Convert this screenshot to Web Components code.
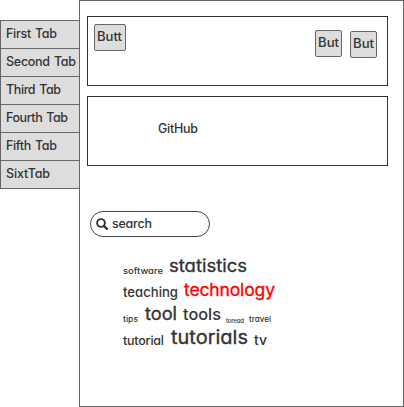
<!DOCTYPE html>
<html lang="en">
<head>
<meta charset="utf-8">
<title>Wireframe</title>
<style>
html,body{margin:0;height:100%;background:#fff;overflow:hidden}
body{font-family:Inter,"Open Sans",sans-serif;font-feature-settings:"cv11";font-size:13px;color:#333;font-weight:450}
</style>
</head>
<body>
<wire-page></wire-page>
<script>
const define = (name, html, ready) => customElements.define(name, class extends HTMLElement {
  connectedCallback() {
    if (this.shadowRoot) return;
    this.attachShadow({mode: "open"}).innerHTML = html;
    if (ready) ready(this);
  }
});

/* A word that fills the width "w": stretched when it is short, spaced tighter when it is long. */
define("fit-text", `<style>
  :host{display:block;white-space:pre;flex:none}
  span{display:inline-block;transform-origin:0 50%;word-spacing:1px}
</style><span><slot></slot></span>`, el => {
  const w = +el.getAttribute("w");
  const span = el.shadowRoot.querySelector("span");
  el.style.fontSize = (el.getAttribute("size") || 12.5) + "px";
  el.style.width = w + "px";
  const natural = span.getBoundingClientRect().width;
  if (natural < w) span.style.transform = `scaleX(${w / natural})`;
  else span.style.letterSpacing = (w - natural) / (el.textContent.length - 1) + "px";
  if (el.hasAttribute("drop")) el.style.transform = `translateY(${el.getAttribute("drop")}px)`;
});

define("side-tab", `<style>
  :host{display:block;box-sizing:border-box;height:28px;padding-left:5px;background:#ddd;
    border:solid #666;border-width:1px 0 0 1px;line-height:25px}
  :host(:last-child){height:29px;border-bottom-width:1px}
</style><slot></slot>`);

define("side-tabs", `<style>
  :host{display:block;width:79px;padding-top:20px;flex:none}
</style>
<side-tab><fit-text w="51">First Tab</fit-text></side-tab>
<side-tab><fit-text w="70">Second Tab</fit-text></side-tab>
<side-tab><fit-text w="55">Third Tab</fit-text></side-tab>
<side-tab><fit-text w="62">Fourth Tab</fit-text></side-tab>
<side-tab><fit-text w="51">Fifth Tab</fit-text></side-tab>
<side-tab><fit-text w="44">SixtTab</fit-text></side-tab>`);

define("wire-button", `<style>
  :host{display:block;box-sizing:border-box;height:27px;border:1px solid #666;border-radius:2px;
    background:#ddd;padding-left:2px;line-height:23px}
</style><slot></slot>`);

define("wire-panel", `<style>
  :host{display:flex;box-sizing:border-box;width:301px;height:70px;border:1px solid #333}
</style><slot></slot>`);

define("search-box", `<style>
  :host{display:flex;box-sizing:border-box;width:120px;height:26px;border:1px solid #444;
    border-radius:13px;line-height:23px;font-weight:500}
  svg{width:12px;height:12px;margin:6px 4px 0 5px}
</style>
<svg viewBox="0 0 12 12" fill="none" stroke="#333"><circle cx="5" cy="5" r="3.9" stroke-width="1.9"/><path d="M7.9 7.9 10.9 10.9" stroke-width="2.2" stroke-linecap="round"/></svg>
<fit-text w="40" size="12.5">search</fit-text>`);

define("tag-cloud", `<style>
  :host{display:flex;flex-direction:column;font-weight:500}
  div{display:flex;align-items:baseline;height:24px;line-height:24px}
  .big{font-weight:400;-webkit-text-stroke:.35px currentColor}
  .hot{color:#f00}
</style>
<div><fit-text size="9" w="40" drop="2">software</fit-text><fit-text class="big" size="17.5" w="78" style="margin-left:6px">statistics</fit-text></div>
<div><fit-text size="13" w="55" drop="1">teaching</fit-text><fit-text class="big hot" size="17.5" w="91" style="margin-left:6px">technology</fit-text></div>
<div><fit-text size="8" w="15" drop="2">tips</fit-text><fit-text class="big" size="18" w="32" style="margin-left:7px">tool</fit-text><fit-text size="15.5" w="38" style="margin-left:6px">tools</fit-text><fit-text size="6" w="18" drop="3" style="margin-left:5px">toread</fit-text><fit-text size="8" w="22" drop="2" style="margin-left:5px">travel</fit-text></div>
<div><fit-text size="12.5" w="41">tutorial</fit-text><fit-text class="big" size="18.5" w="77" drop="-1" style="margin-left:7px">tutorials</fit-text><fit-text size="14" w="13" style="margin-left:6px">tv</fit-text></div>`);

define("wire-page", `<style>
  :host{display:flex;width:404px;height:407px}
  main{box-sizing:border-box;width:325px;height:407px;border:1px solid #666;padding:15px 0 0 7px}
  .b1{width:32px;margin:7px 0 0 6px}
  .b2{width:27px;margin:13px 0 0 189px}
  .b3{width:27px;margin:14px 0 0 8px}
  wire-panel+wire-panel{margin-top:10px}
  .hub{margin:22px 0 0 70px;line-height:19px}
  search-box{margin:45px 0 0 3px}
  tag-cloud{margin:17px 0 0 36px}
</style>
<side-tabs></side-tabs>
<main>
  <wire-panel>
    <wire-button class="b1"><fit-text w="25">Butt</fit-text></wire-button>
    <wire-button class="b2"><fit-text w="21">But</fit-text></wire-button>
    <wire-button class="b3"><fit-text w="21">But</fit-text></wire-button>
  </wire-panel>
  <wire-panel><fit-text class="hub" w="40">GitHub</fit-text></wire-panel>
  <search-box></search-box>
  <tag-cloud></tag-cloud>
</main>`);
</script>
</body>
</html>
